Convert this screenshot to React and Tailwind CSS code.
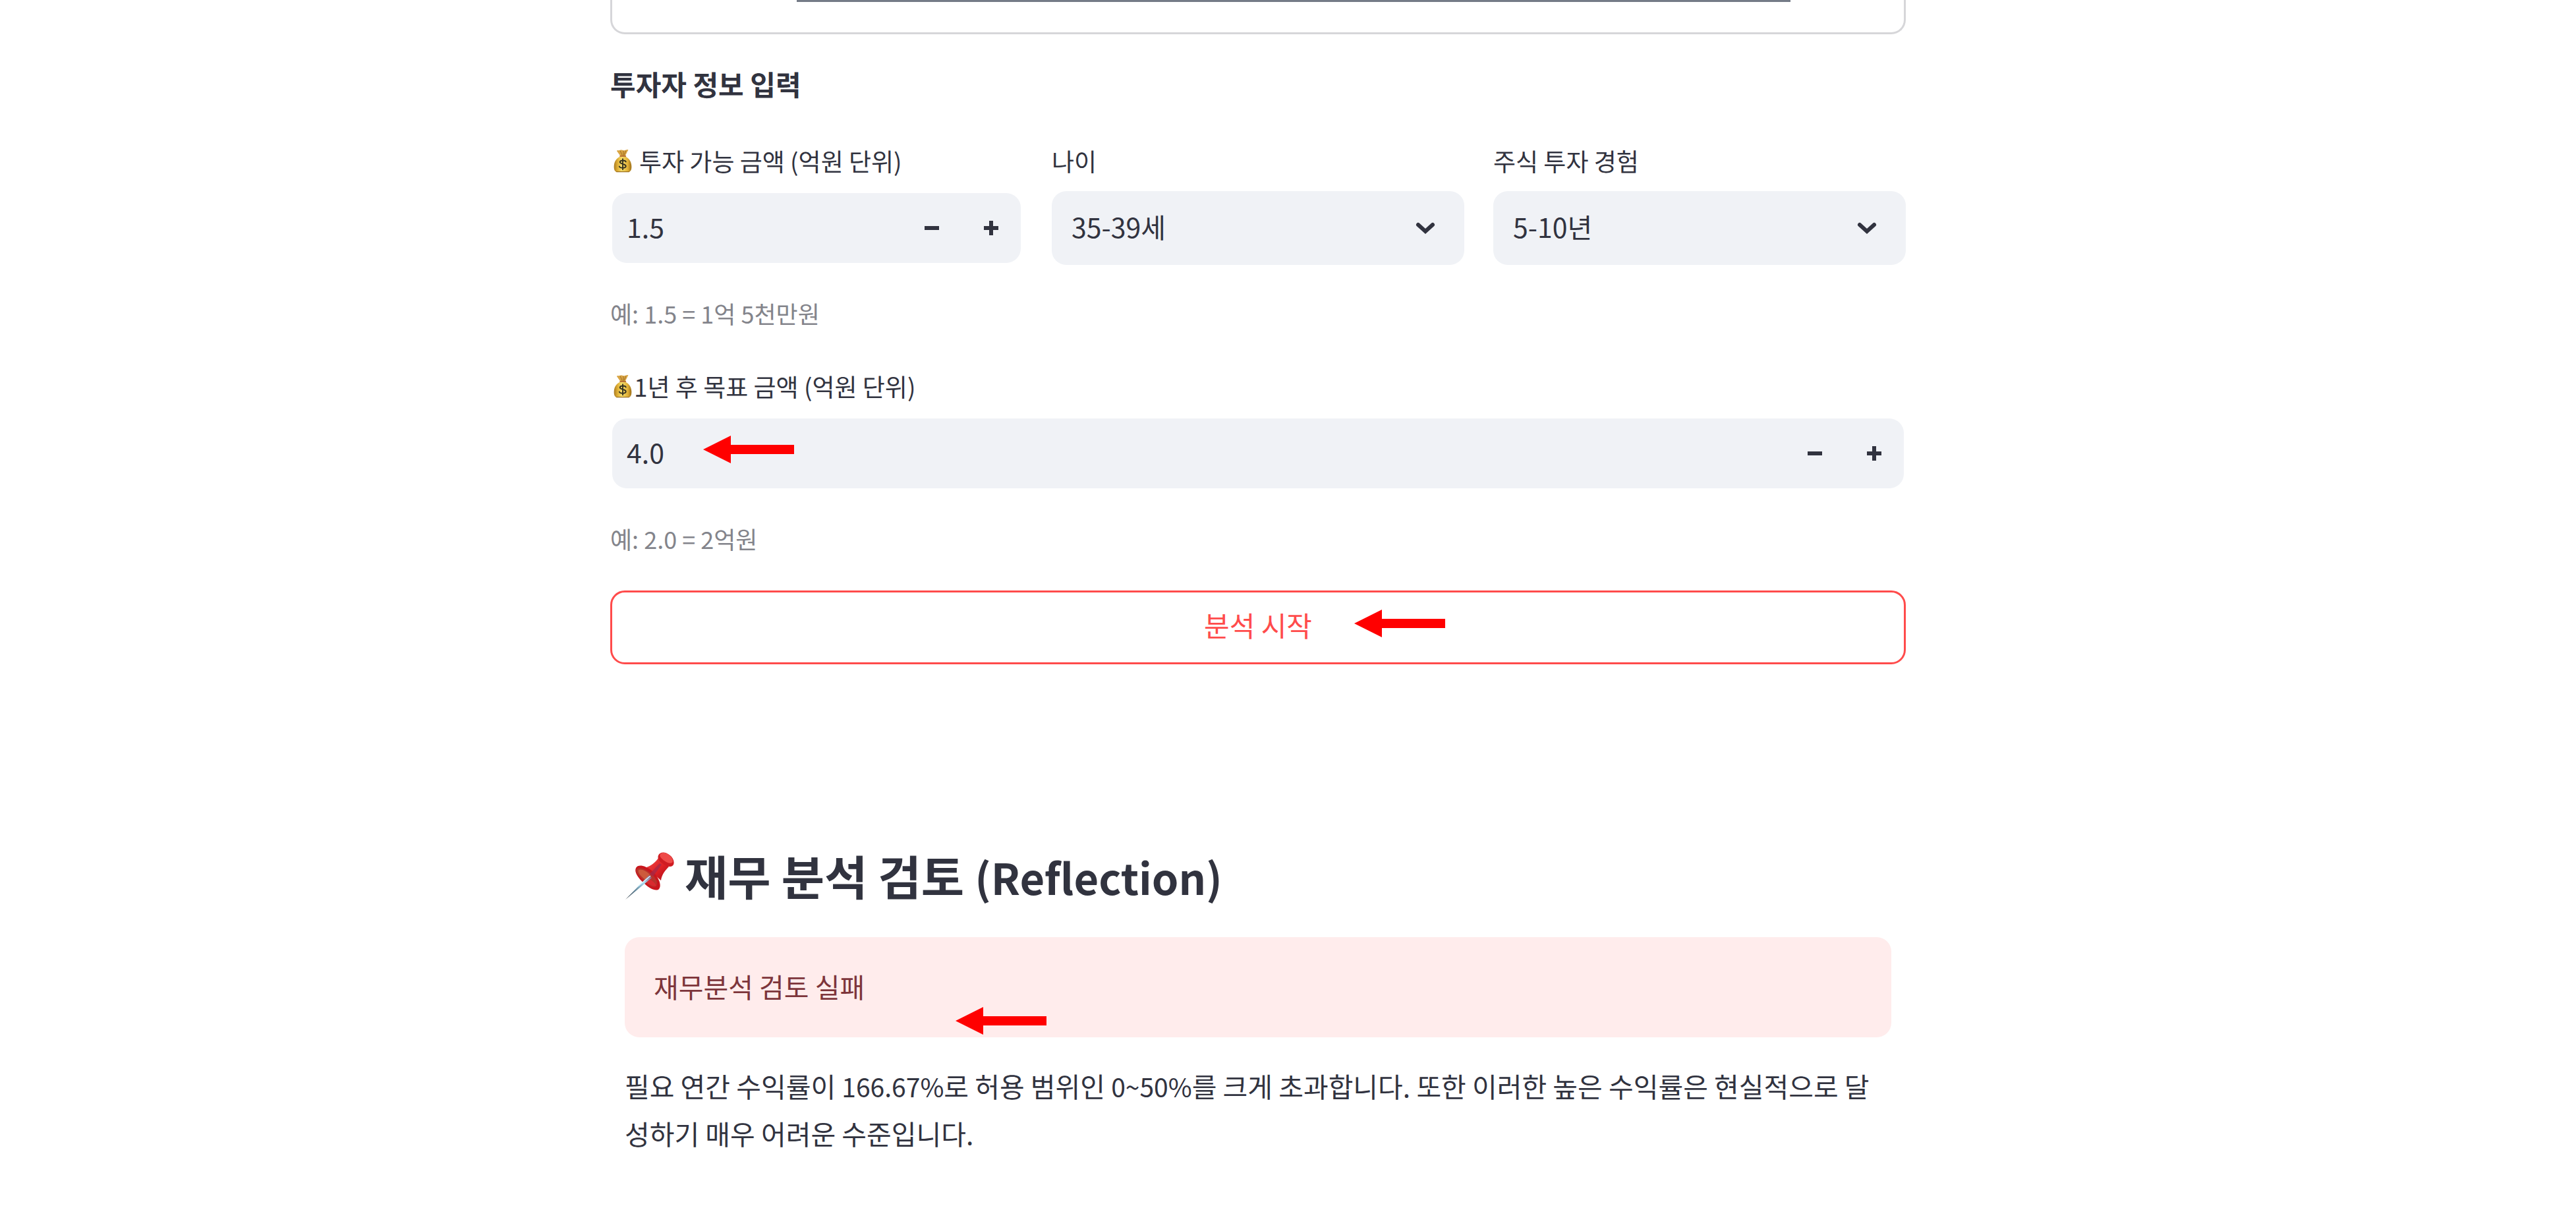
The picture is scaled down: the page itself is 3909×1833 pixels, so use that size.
import { useState } from 'react';

function MoneyBag() {
  return (
    <svg aria-hidden="true" viewBox="0 0 30 38" className="h-9 w-[30px] shrink-0">
      <defs>
        <linearGradient id="bag" x1="0" y1="0" x2="1" y2="0">
          <stop offset="0" stopColor="#a87a22" />
          <stop offset="0.2" stopColor="#dfae35" />
          <stop offset="0.45" stopColor="#f7df6b" />
          <stop offset="0.8" stopColor="#dfae35" />
          <stop offset="1" stopColor="#9a6c16" />
        </linearGradient>
      </defs>
      <path d="M7 2c3 1 4-1 8 0s5-1 8-1c1 0 1 1 0 2l-4 8h-8L6 4C5 3 6 2 7 2z" fill="#d9a544" />
      <path d="M11 3l3 7M16 3v7M20 3l-3 7" stroke="#9a6a22" strokeWidth="1" />
      <path d="M11 12h8c6 3 9.500 8 10 15 .5 7-2 10-5 10H6c-3 0-5.500-3-5-10 .5-7 4-12 10-15z" fill="url(#bag)" />
      <path d="M11 11.500h8.500" stroke="#b0642a" strokeWidth="2" strokeLinecap="round" />
      <path d="M5 36.500h20" stroke="#9c6f1c" strokeWidth="1.200" strokeLinecap="round" />
      <path
        d="M20 20.500c-1-2.500-9-3-9.500.5s9 2.500 9.500 6.500c.3 4-9.500 3.500-10.500.5M15 16v17"
        fill="none"
        stroke="#33301f"
        strokeWidth="2"
        strokeLinecap="round"
      />
    </svg>
  );
}

function Pushpin() {
  return (
    <svg aria-hidden="true" viewBox="0 0 75 75" className="h-[75px] w-[75px] shrink-0">
      <defs>
        <linearGradient id="needle" x1="0" y1="1" x2="1" y2="0">
          <stop offset="0" stopColor="#2c3238" />
          <stop offset="0.35" stopColor="#5d7f93" />
          <stop offset="0.7" stopColor="#a9dcf2" />
          <stop offset="1" stopColor="#8d4a68" />
        </linearGradient>
        <linearGradient id="body" x1="0" y1="0" x2="1" y2="1">
          <stop offset="0" stopColor="#f04a48" />
          <stop offset="0.55" stopColor="#dd1f24" />
          <stop offset="1" stopColor="#a90f18" />
        </linearGradient>
      </defs>
      <path d="M33 25c7-2 14-8 18-14l16 13c-5 5-11 12-12 21z" fill="url(#body)" />
      <path d="M51 7c2-5 9-6 15-2 7 4 10 11 8 16-2 4-8 4-14 0-7-4-11-9-9-14z" fill="#cf1c22" />
      <path d="M54 5c4-4 10-2 14 2 5 4 6 9 4 11-3 2-8 0-12-3-5-4-8-7-6-10z" fill="#ee4a48" />
      <path d="M17 26c3-6 14-4 24 4 10 9 16 22 11 28-4 4-14 0-23-9-9-8-15-17-12-23z" fill="#c9161d" />
      <path d="M18 28c4-4 13-1 21 6 8 6 12 14 9 19-3 4-11 0-18-7-8-7-15-14-12-18z" fill="#b8322b" />
      <path d="M21 29c5-2 12 2 17 7l-7 8c-6-5-12-11-10-15z" fill="#cd5a3c" />
      <path d="M37 43c5 2 9 6 11 10-4 2-12-2-17-7z" fill="#d92a2f" />
      <path d="M38 35l15-16 3 2-13 18z" fill="#a3294a" opacity="0.75" />
      <path d="M1 74L37 37l4 4z" fill="url(#needle)" />
      <path d="M20 54l19-16" stroke="#d8f3ff" strokeWidth="1.500" />
    </svg>
  );
}

function Arrow({ className }) {
  return (
    <svg aria-hidden="true" viewBox="0 0 138 42" className={`pointer-events-none absolute h-[42px] w-[138px] ${className}`}>
      <path d="M0 21L42 0v14h96v14H42v14z" fill="#ff0000" />
    </svg>
  );
}

const label = 'mb-5 flex h-[52px] items-center text-[37px] leading-[52px]';
const hint = 'mt-[43px] text-[36px] leading-[60px] text-[#83848b]';

function NumberField({ id, text, spaced, initial, children }) {
  const [value, setValue] = useState(initial);
  const step = (d) => setValue((v) => ((Number(v) || 0) + d).toFixed(1));
  return (
    <div>
      <label htmlFor={id} className={label}>
        <span className={spaced ? 'mr-2.5 flex pl-1' : 'mr-0.5 flex pl-1'}>
          <MoneyBag />
        </span>
        {text}
      </label>
      <div className="relative flex h-28 overflow-hidden rounded-[25px] border-[3px] border-transparent bg-[#f0f2f6] bg-clip-padding">
        <input
          id={id}
          type="text"
          inputMode="decimal"
          value={value}
          onChange={(e) => setValue(e.target.value)}
          className="min-w-0 flex-1 bg-transparent pb-1 pl-[22px] text-[41px] outline-none"
        />
        <button type="button" aria-label="감소" onClick={() => step(-0.1)} className="flex w-[90px] items-center justify-center">
          <svg viewBox="0 0 24 24" className="size-6">
            <path d="M1 9h22v6H1z" fill="#31333f" />
          </svg>
        </button>
        <button type="button" aria-label="증가" onClick={() => step(0.1)} className="flex w-[90px] items-center justify-center">
          <svg viewBox="0 0 24 24" className="size-6">
            <path d="M9 1h6v8h8v6h-8v8H9v-8H1V9h8z" fill="#31333f" />
          </svg>
        </button>
        {children}
      </div>
    </div>
  );
}

function SelectField({ id, text, options, initial }) {
  return (
    <div>
      <label htmlFor={id} className={label}>
        {text}
      </label>
      <div className="relative">
        <select
          id={id}
          defaultValue={initial}
          className="h-28 w-full appearance-none rounded-[22px] bg-[#f0f2f6] pr-24 pb-1 pl-[30px] text-[41px] outline-none"
        >
          {options.map((o) => (
            <option key={o}>{o}</option>
          ))}
        </select>
        <svg aria-hidden="true" viewBox="0 0 32 20" className="pointer-events-none absolute inset-y-0 right-[43px] my-auto h-5 w-8">
          <path d="M5 5l11 10L27 5" fill="none" stroke="#31333f" strokeWidth="6" strokeLinecap="round" />
        </svg>
      </div>
    </div>
  );
}

export default function App() {
  return (
    <div className="min-h-screen bg-white pr-[91px] font-['Noto_Sans_CJK_KR',sans-serif] text-[#31333f]">
      <main className="mx-auto w-full max-w-[1966px]">
        <div className="rounded-b-[22px] border-x-[3px] border-b-[3px] border-[#d6d6d9] pr-[172px] pb-[46px] pl-[280px]">
          <div className="h-[3px] bg-[#747b87]" />
        </div>

        <form onSubmit={(e) => e.preventDefault()}>
          <h2 className="mt-[42px] text-[42px] leading-[66px] font-bold">투자자 정보 입력</h2>

          <div className="mt-[58px] grid grid-cols-3 gap-11">
            <NumberField id="amount" text="투자 가능 금액 (억원 단위)" spaced initial="1.5" />
            <SelectField
              id="age"
              text="나이"
              initial="35-39세"
              options={['20-24세', '25-29세', '30-34세', '35-39세', '40-44세']}
            />
            <SelectField
              id="experience"
              text="주식 투자 경험"
              initial="5-10년"
              options={['0-1년', '1-3년', '3-5년', '5-10년', '10년 이상']}
            />
          </div>
          <p className={hint}>예: 1.5 = 1억 5천만원</p>

          <div className="mt-[55px]">
            <NumberField id="target" text="1년 후 목표 금액 (억원 단위)" initial="4.0">
              <Arrow className="top-[26px] left-[138px]" />
            </NumberField>
          </div>
          <p className={hint}>예: 2.0 = 2억원</p>

          <button
            type="submit"
            className="relative mt-[49px] flex h-28 w-full items-center justify-center rounded-[22px] border-[3px] border-[#ff4b4b] pb-2.5 text-[42px] text-[#ff4b4b]"
          >
            분석 시작
            <Arrow className="top-[26px] left-[1126px]" />
          </button>
        </form>

        <section className="mt-[274px] px-[22px]">
          <h1 className="flex h-[92px] items-center text-[71px] leading-[92px] font-bold">
            <Pushpin />
            <span className="ml-4">
              재무 분석 검토 <span className="text-[65px]">(Reflection)</span>
            </span>
          </h1>
          <div role="alert" className="relative mt-[48px] rounded-[22px] bg-[#ffecec] px-11 pt-[38px] pb-[42px] text-[41px] leading-[72px] text-[#7d353b]">
            재무분석 검토 실패
            <Arrow className="bottom-1 left-[502px]" />
          </div>
          <p className="mt-[38px] text-[41px] leading-[71px]">
            필요 연간 수익률이 <span className="text-[39px]">166.67%</span>로 허용 범위인 <span className="text-[39px]">0~50%</span>를 크게 초과합니다. 또한 이러한 높은 수익률은 현실적으로 달성하기 매우 어려운 수준입니다.
          </p>
        </section>
      </main>
    </div>
  );
}
